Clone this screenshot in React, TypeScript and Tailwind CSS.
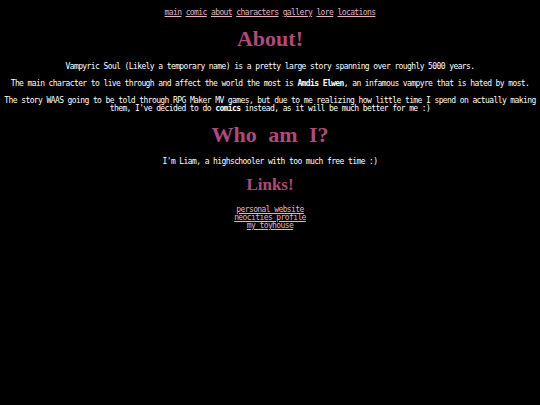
const navLinks = ["main", "comic", "about", "characters", "gallery", "lore", "locations"];
const extLinks = ["personal website", "neocities profile", "my toyhouse"];

function Heading({ children, className }: { children: React.ReactNode; className: string }) {
  return (
    <h2
      className={`font-bold text-[#ad4b79] ${className}`}
      style={{ fontFamily: '"Liberation Serif", "Times New Roman", serif' }}
    >
      {children}
    </h2>
  );
}

export default function App() {
  return (
    <div
      className="min-h-screen w-full bg-black text-center text-[8px] leading-[8px] tracking-[-0.6px] text-white"
      style={{ fontFamily: '"DejaVu Sans Mono", "Liberation Mono", monospace' }}
    >
      <nav className="pt-[9px]">
        {navLinks.map((l, i) => (
          <span key={l}>
            <a href="#" className="text-[#e4b4c6] underline">
              {l}
            </a>
            {i < navLinks.length - 1 ? " " : ""}
          </span>
        ))}
      </nav>

      <Heading className="mt-[10px] text-[22px] leading-[24px] tracking-normal">About!</Heading>

      <p className="mt-[12px]">
        Vampyric Soul (Likely a temporary name) is a pretty large story spanning over roughly 5000 years.
      </p>
      <p className="mt-[9px]">
        The main character to live through and affect the world the most is <b>Amdis Elwen</b>, an infamous
        vampyre that is hated by most.
      </p>
      <p className="mt-[9px]">
        The story WAAS going to be told through RPG Maker MV games, but due to me realizing how little time I
        spend on actually making
        <br />
        them, I've decided to do <b>comics</b> instead, as it will be much better for me :)
      </p>

      <Heading className="mt-[10px] text-[22px] leading-[24px] tracking-normal [word-spacing:6px]">
        Who am I?
      </Heading>

      <p className="mt-[11px]">I'm Liam, a highschooler with too much free time :)</p>

      <Heading className="mt-[10px] text-[17px] leading-[18px] tracking-normal">Links!</Heading>

      <div className="mt-[12px] flex flex-col items-center">
        {extLinks.map((l) => (
          <a key={l} href="#" className="text-[#e4b4c6] underline">
            {l}
          </a>
        ))}
      </div>
    </div>
  );
}
